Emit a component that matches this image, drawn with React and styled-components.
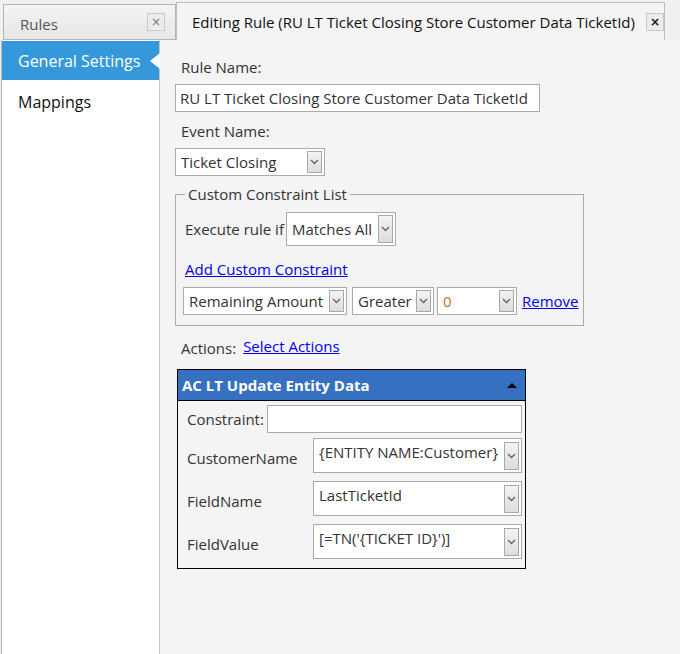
import React from 'react';
import styled, { createGlobalStyle } from 'styled-components';

const GlobalStyle = createGlobalStyle`
  html, body {
    margin: 0;
    padding: 0;
    background: #f0f0f0;
    font-family: "Open Sans", "Noto Sans", sans-serif;
    font-size: 15px;
    color: #333;
  }
`;

const Page = styled.div`
  width: 680px;
  height: 654px;
  display: flex;
  flex-direction: column;
  overflow: hidden;
  background: #f0f0f0;
`;

const TabStrip = styled.div`
  display: flex;
  align-items: flex-end;
  height: 40px;
  padding-left: 3px;
`;

const Tab = styled.div`
  display: flex;
  align-items: center;
  box-sizing: border-box;
  height: ${p => (p.$active ? '38px' : '36px')};
  width: ${p => p.$width}px;
  padding: ${p => (p.$active ? '0 0 0 15px' : '3px 0 0 16px')};
  gap: 6px;
  border: 1px solid ${p => (p.$active ? '#bdbdbd' : '#b3b3b3')};
  border-bottom: ${p => (p.$active ? 'none' : '1px solid #b3b3b3')};
  background: ${p => (p.$active ? '#f4f4f4' : 'linear-gradient(#f4f4f4, #e6e6e6)')};
  color: ${p => (p.$active ? '#111' : '#555')};
`;

const TabLabel = styled.span`
  flex: 1;
  white-space: nowrap;
`;

const CloseBox = styled.span`
  display: flex;
  align-items: center;
  justify-content: center;
  box-sizing: border-box;
  width: 18px;
  height: 18px;
  margin-right: ${p => p.$mr}px;
  margin-top: ${p => p.$mt || 0}px;
  border: 1px solid #c8c8c8;
  background: #ececec;
  font-family: "DejaVu Sans", sans-serif;
  font-size: 12px;
  font-weight: ${p => (p.$bold ? 700 : 400)};
  color: ${p => (p.$bold ? '#111' : '#777')};
  line-height: 1;
`;

const Body = styled.div`
  flex: 1;
  display: flex;
`;

const Side = styled.div`
  width: 159px;
  margin-left: 1px;
  box-sizing: border-box;
  border-left: 1px solid #b5b5b5;
  border-right: 1px solid #c4c4c4;
  background: #fff;
  padding-top: 1px;
`;

const SideItem = styled.div`
  position: relative;
  height: 39px;
  display: flex;
  align-items: center;
  padding-left: 16px;
  padding-top: ${p => (p.$active ? 0 : 2)}px;
  font-size: 16px;
  background: ${p => (p.$active ? '#3598db' : '#fff')};
  color: ${p => (p.$active ? '#fff' : '#111')};

  ${p =>
    p.$active &&
    `&::after {
      content: '';
      position: absolute;
      right: -1px;
      top: 12px;
      border-style: solid;
      border-width: 8px 10px 8px 0;
      border-color: transparent #fff transparent transparent;
    }`}
`;

const Content = styled.div`
  flex: 1;
  background: #f4f4f4;
  padding: 17px 0 0 15px;
  display: flex;
  flex-direction: column;
  align-items: flex-start;
`;

const Label = styled.div`
  color: #333;
  font-size: 15px;
  padding-left: ${p => p.$indent || 6}px;
  margin-top: ${p => p.$mt || 0}px;
  margin-bottom: ${p => p.$mb || 0}px;
`;

const TextBox = styled.div`
  box-sizing: border-box;
  width: ${p => p.$w}px;
  height: ${p => p.$h || 28}px;
  border: 1px solid #ababab;
  background: #fff;
  display: flex;
  align-items: center;
  padding-left: 4px;
  font-size: 15px;
  color: #333;
  white-space: nowrap;
  overflow: hidden;
  flex-shrink: 0;
`;

const Select = styled.div`
  box-sizing: border-box;
  width: ${p => p.$w}px;
  height: ${p => p.$h || 28}px;
  border: 1px solid #ababab;
  background: #fff;
  display: flex;
  align-items: ${p => (p.$top ? 'flex-start' : 'center')};
  padding: ${p => (p.$top ? '3px 2px 2px 5px' : '2px 2px 2px 5px')};
  font-size: 15px;
  color: ${p => p.$color || '#333'};
  white-space: nowrap;
  flex-shrink: 0;
`;

const SelectText = styled.span`
  flex: 1;
  overflow: hidden;
`;

const ArrowBtn = styled.span`
  box-sizing: border-box;
  width: 15px;
  align-self: stretch;
  border: 1px solid #a8a8a8;
  background: linear-gradient(#f3f3f3, #dddddd);
  display: flex;
  align-items: center;
  justify-content: center;
  flex-shrink: 0;
`;

const Chevron = () => (
  <svg width="9" height="6" viewBox="0 0 9 6">
    <path d="M1 1 L4.5 4.5 L8 1" fill="none" stroke="#666" strokeWidth="1.4" />
  </svg>
);

const Dropdown = ({ w, h, top, color, children }) => (
  <Select $w={w} $h={h} $top={top} $color={color}>
    <SelectText>{children}</SelectText>
    <ArrowBtn>
      <Chevron />
    </ArrowBtn>
  </Select>
);

const Fieldset = styled.fieldset`
  box-sizing: border-box;
  width: 404px;
  margin: 8px 0 0 0;
  padding: 8px 4px 10px 7px;
  border: 1px solid #ababab;
  display: flex;
  flex-direction: column;
  align-items: flex-start;

  legend {
    padding: 0 3px;
    margin-left: 2px;
    color: #333;
  }
`;

const Row = styled.div`
  display: flex;
  align-items: center;
  gap: ${p => p.$gap || 0}px;
  margin-top: ${p => p.$mt || 0}px;
`;

const Plain = styled.span`
  color: #333;
  margin-left: ${p => p.$ml || 0}px;
`;

const Link = styled.a`
  color: #0000ee;
  text-decoration: underline;
  font-size: 15px;
  cursor: pointer;
  margin-left: ${p => p.$ml || 0}px;
  margin-top: ${p => p.$mt || 0}px;
`;

const ActionPanel = styled.div`
  margin: 11px 0 0 2px;
  box-sizing: border-box;
  width: 349px;
  border: 1px solid #000;
  background: #f4f4f4;
`;

const ActionHeader = styled.div`
  height: 30px;
  background: #3670c1;
  border-bottom: 1px solid #000;
  display: flex;
  align-items: center;
  justify-content: space-between;
  padding: 0 8px 0 4px;
  color: #fff;
  font-weight: 700;
  font-size: 15px;
`;

const UpTriangle = styled.span`
  width: 0;
  height: 0;
  border-style: solid;
  border-width: 0 5px 5px 5px;
  border-color: transparent transparent #000 transparent;
`;

const ActionBody = styled.div`
  display: grid;
  grid-template-columns: 130px 209px;
  row-gap: 8px;
  padding: 4px 4px 9px 5px;
  align-items: center;
`;

const ConstraintRow = styled.div`
  grid-column: 1 / span 2;
  display: flex;
  align-items: center;
  gap: 3px;
  margin-bottom: -3px;
`;

const FieldLabel = styled.div`
  color: #333;
  padding-left: 4px;
  padding-top: ${p => p.$pt || 0}px;
`;

export default function App() {
  return (
    <Page>
      <GlobalStyle />
      <TabStrip>
        <Tab $width={173}>
          <TabLabel>Rules</TabLabel>
          <CloseBox $mr={10} $mt={-3}>×</CloseBox>
        </Tab>
        <Tab $width={489} $active>
          <TabLabel>Editing Rule (RU LT Ticket Closing Store Customer Data TicketId)</TabLabel>
          <CloseBox $mr={0} $bold>×</CloseBox>
        </Tab>
      </TabStrip>
      <Body>
        <Side>
          <SideItem $active>General Settings</SideItem>
          <SideItem>Mappings</SideItem>
        </Side>
        <Content>
          <Label $mb={7}>Rule Name:</Label>
          <TextBox $w={365}>RU LT Ticket Closing Store Customer Data TicketId</TextBox>
          <Label $mb={7} $mt={9}>Event Name:</Label>
          <Dropdown w={150}>Ticket Closing</Dropdown>
          <Fieldset>
            <legend>Custom Constraint List</legend>
            <Row $gap={2}>
              <Plain $ml={2}>Execute rule if</Plain>
              <Dropdown w={110} h={34}>Matches All</Dropdown>
            </Row>
            <Row $mt={13}>
              <Link $ml={2}>Add Custom Constraint</Link>
            </Row>
            <Row $mt={8} $gap={5}>
              <Dropdown w={164}>Remaining Amount</Dropdown>
              <Dropdown w={82}>Greater</Dropdown>
              <span style={{ marginLeft: -2 }}>
                <Dropdown w={80} color="#b87333">0</Dropdown>
              </span>
              <Link>Remove</Link>
            </Row>
          </Fieldset>
          <Row $mt={12} $gap={7}>
            <Label>Actions:</Label>
            <Link $mt={-4}>Select Actions</Link>
          </Row>
          <ActionPanel>
            <ActionHeader>
              <span>AC LT Update Entity Data</span>
              <UpTriangle />
            </ActionHeader>
            <ActionBody>
              <ConstraintRow>
                <FieldLabel>Constraint:</FieldLabel>
                <TextBox $w={255} />
              </ConstraintRow>
              <FieldLabel $pt={5}>CustomerName</FieldLabel>
              <Dropdown w={209} h={35} top>{'{ENTITY NAME:Customer}'}</Dropdown>
              <FieldLabel $pt={5}>FieldName</FieldLabel>
              <Dropdown w={209} h={35} top>LastTicketId</Dropdown>
              <FieldLabel $pt={5}>FieldValue</FieldLabel>
              <Dropdown w={209} h={35} top>{"[=TN('{TICKET ID}')]"}</Dropdown>
            </ActionBody>
          </ActionPanel>
        </Content>
      </Body>
    </Page>
  );
}
